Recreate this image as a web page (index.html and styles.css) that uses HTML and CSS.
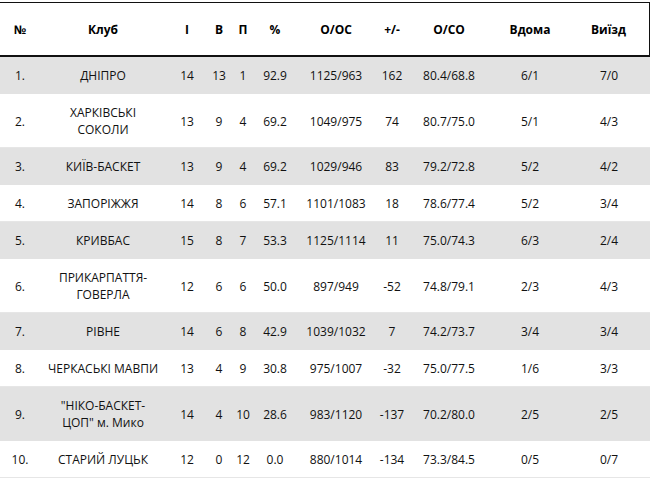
FILE: index.html
```html
<!DOCTYPE html>
<html lang="uk">
<head>
<meta charset="utf-8">
<link rel="stylesheet" href="styles.css">
</head>
<body>
<div class="wrap">
<table class="standings">
  <colgroup>
    <col class="c-pos"><col class="c-club"><col class="c-g"><col class="c-w"><col class="c-l"><col class="c-pct"><col class="c-pts"><col class="c-diff"><col class="c-avg"><col class="c-home"><col class="c-away">
  </colgroup>
  <thead>
    <tr><th>№</th><th>Клуб</th><th>І</th><th>В</th><th>П</th><th>%</th><th>О/ОС</th><th>+/-</th><th>О/СО</th><th>Вдома</th><th>Виїзд</th></tr>
  </thead>
  <tbody>
    <tr class="alt"><td>1.</td><td>ДНІПРО</td><td>14</td><td>13</td><td>1</td><td>92.9</td><td>1125/963</td><td>162</td><td>80.4/68.8</td><td>6/1</td><td>7/0</td></tr>
    <tr><td>2.</td><td>ХАРКІВСЬКІ СОКОЛИ</td><td>13</td><td>9</td><td>4</td><td>69.2</td><td>1049/975</td><td>74</td><td>80.7/75.0</td><td>5/1</td><td>4/3</td></tr>
    <tr class="alt"><td>3.</td><td>КИЇВ-БАСКЕТ</td><td>13</td><td>9</td><td>4</td><td>69.2</td><td>1029/946</td><td>83</td><td>79.2/72.8</td><td>5/2</td><td>4/2</td></tr>
    <tr><td>4.</td><td>ЗАПОРІЖЖЯ</td><td>14</td><td>8</td><td>6</td><td>57.1</td><td>1101/1083</td><td>18</td><td>78.6/77.4</td><td>5/2</td><td>3/4</td></tr>
    <tr class="alt"><td>5.</td><td>КРИВБАС</td><td>15</td><td>8</td><td>7</td><td>53.3</td><td>1125/1114</td><td>11</td><td>75.0/74.3</td><td>6/3</td><td>2/4</td></tr>
    <tr><td>6.</td><td>ПРИКАРПАТТЯ-ГОВЕРЛА</td><td>12</td><td>6</td><td>6</td><td>50.0</td><td>897/949</td><td>-52</td><td>74.8/79.1</td><td>2/3</td><td>4/3</td></tr>
    <tr class="alt"><td>7.</td><td>РІВНЕ</td><td>14</td><td>6</td><td>8</td><td>42.9</td><td>1039/1032</td><td>7</td><td>74.2/73.7</td><td>3/4</td><td>3/4</td></tr>
    <tr><td>8.</td><td>ЧЕРКАСЬКІ МАВПИ</td><td>13</td><td>4</td><td>9</td><td>30.8</td><td>975/1007</td><td>-32</td><td>75.0/77.5</td><td>1/6</td><td>3/3</td></tr>
    <tr class="alt"><td>9.</td><td>"НІКО-БАСКЕТ-ЦОП" м. Мико</td><td>14</td><td>4</td><td>10</td><td>28.6</td><td>983/1120</td><td>-137</td><td>70.2/80.0</td><td>2/5</td><td>2/5</td></tr>
    <tr><td>10.</td><td>СТАРИЙ ЛУЦЬК</td><td>12</td><td>0</td><td>12</td><td>0.0</td><td>880/1014</td><td>-134</td><td>73.3/84.5</td><td>0/5</td><td>0/7</td></tr>
  </tbody>
</table>
</div>
</body>
</html>
```
FILE: styles.css
```css
html, body {
  margin: 0;
  padding: 0;
  background: #ffffff;
}
.wrap {
  padding-top: 2px;
}
.standings {
  width: 650px;
  table-layout: fixed;
  border-collapse: collapse;
  font-family: "Open Sans", "Noto Sans", sans-serif;
  font-size: 12px;
  line-height: 17px;
  color: #000;
}
.c-pos { width: 40px; }
.c-club { width: 126px; }
.c-g { width: 42px; }
.c-w { width: 22px; }
.c-l { width: 26px; }
.c-pct { width: 38px; }
.c-pts { width: 84px; }
.c-diff { width: 28px; }
.c-avg { width: 86px; }
.c-home { width: 76px; }
.c-away { width: 82px; }

.standings th {
  font-weight: 700;
  text-align: center;
  padding: 18px 0 17px;
  color: #000;
  border-top: 1px solid #111;
  border-bottom: 2px solid #111;
}
.standings th:last-child {
  border-right: 2px solid #111;
}
.standings td {
  text-align: center;
  padding: 10px 0 9px;
  border-bottom: 1px solid #e6e6e6;
  color: #111;
}
.standings td:nth-child(2) {
  padding-left: 5px;
  padding-right: 5px;
}
.standings tr.alt td {
  background: #e2e2e2;
  border-bottom-color: #e2e2e2;
}
```
